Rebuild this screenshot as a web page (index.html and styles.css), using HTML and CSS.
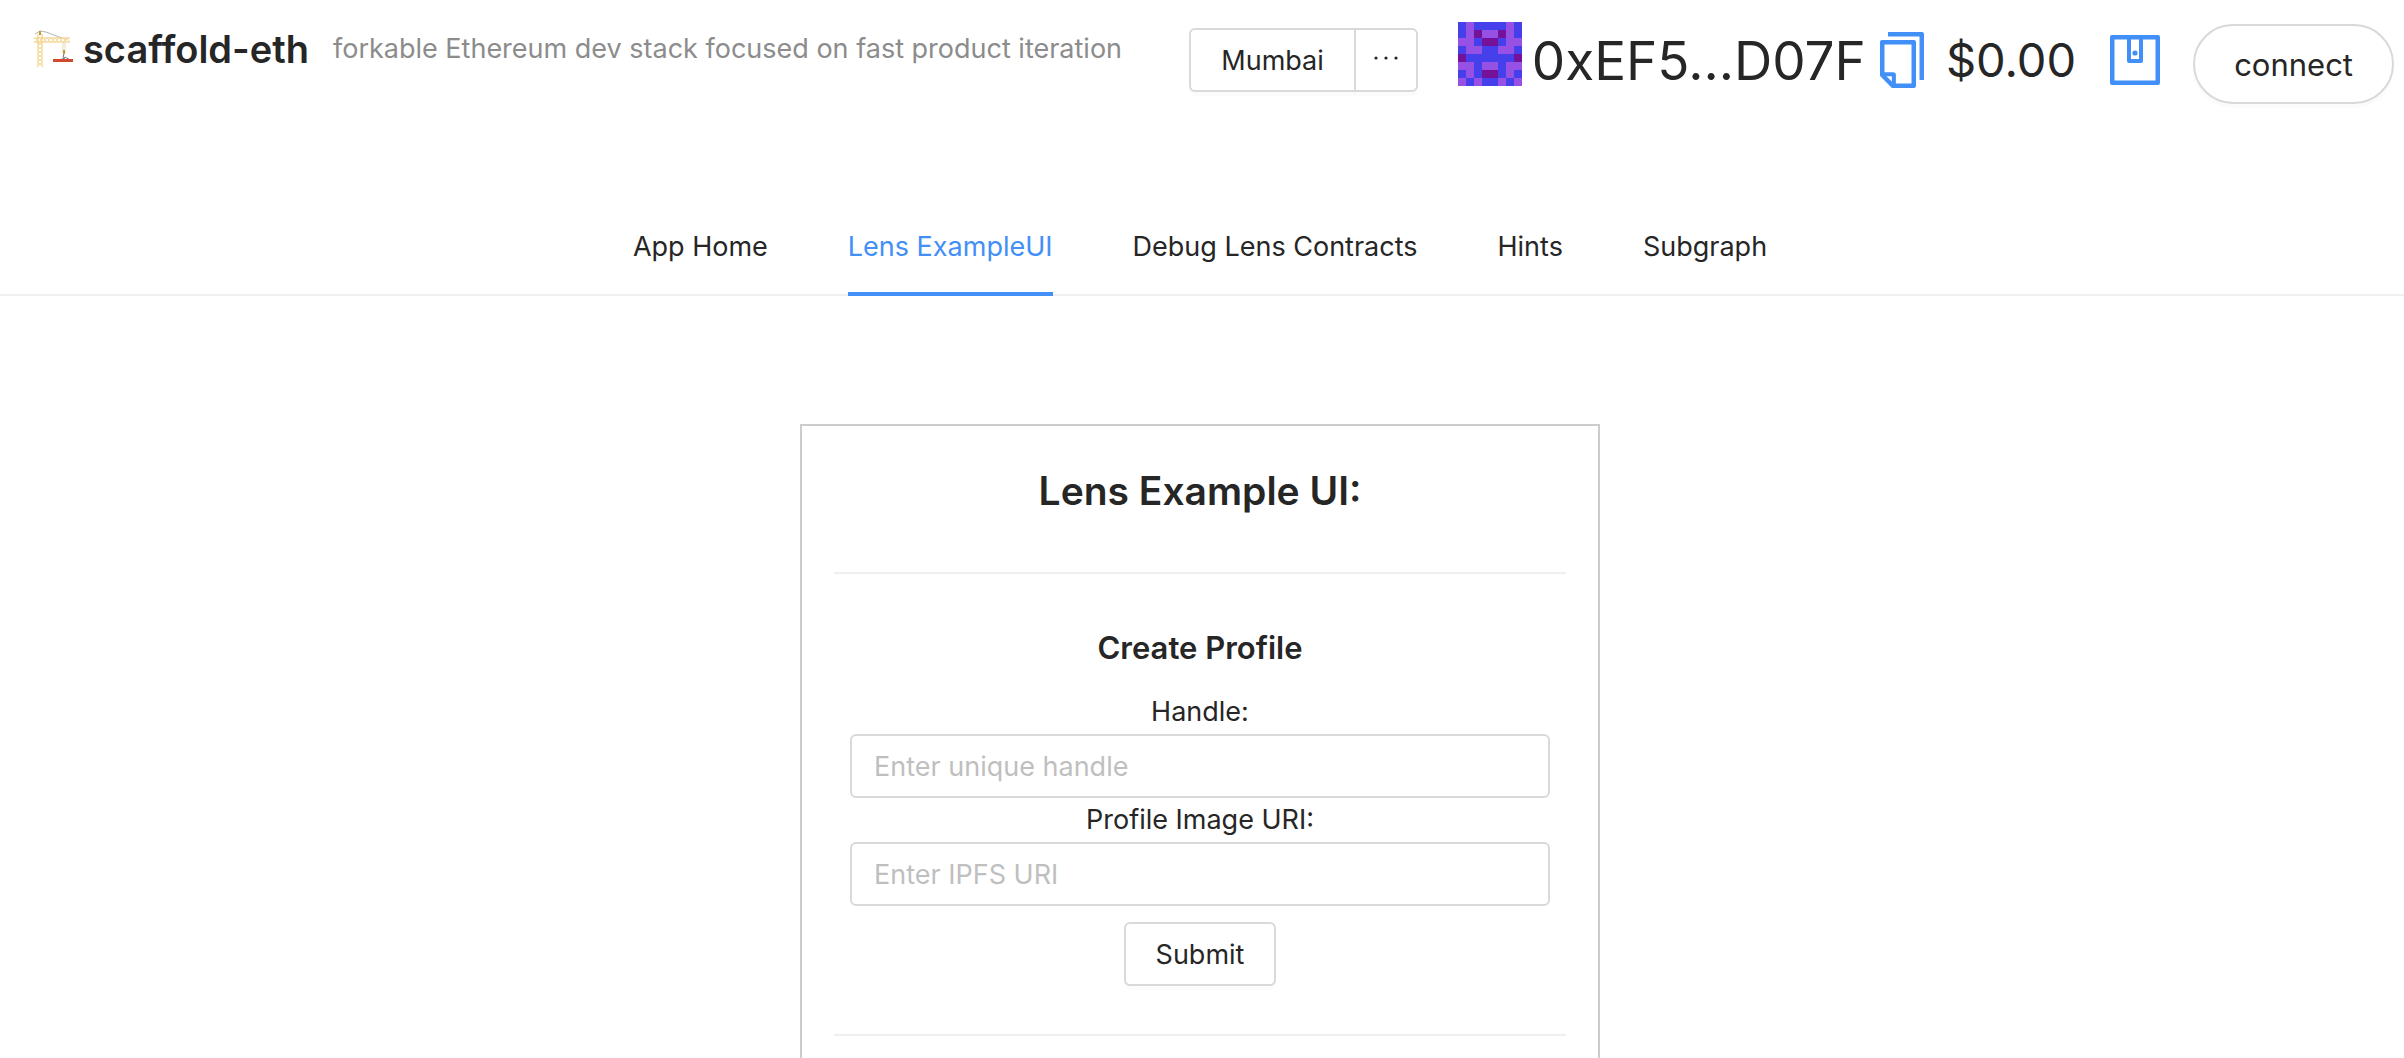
FILE: index.html
```html
<!DOCTYPE html>
<html lang="en">
<head>
<meta charset="utf-8">
<title>scaffold-eth</title>
<meta name="viewport" content="width=device-width, initial-scale=1">
<link rel="stylesheet" href="styles.css">
</head>
<body>
<header class="header">
  <a class="brand" href="#">
    <svg class="crane" viewBox="0 0 40 40" aria-hidden="true">
      <path d="M1 5L6 2L12 3L33 11" fill="none" stroke="#b5b5b5" stroke-width="1"/>
      <g fill="none" stroke="#f1c76a" stroke-width="1">
        <path d="M4 5V38M8 5V38" />
        <path d="M4 13l4 4l-4 4l4 4l-4 4l4 4l-4 4M8 13l-4 4l4 4l-4 4l4 4l-4 4l4 4" stroke="#f5dca4"/>
        <path d="M0 9H36M0 13H36"/>
        <path d="M1 9l4 4l4-4l4 4l4-4l4 4l4-4l4 4l4-4l3 4M1 13l4-4l4 4l4-4l4 4l4-4l4 4l4-4l4 4" stroke="#f5dca4"/>
        <path d="M29 13V24M31 13V24" stroke="#ead9b0"/>
      </g>
      <path d="M5 2h2v4h-2zM29 21h2v4h-2z" fill="#c39a2f"/>
      <path d="M30 25l-1 3l2 1l-8 3M31 28l7 4" fill="none" stroke="#777" stroke-width="1"/>
      <path d="M19 30h20v3h-20z" fill="#d2492f"/>
    </svg>
    <h1 class="brand-name">scaffold-eth</h1>
    <span class="tagline">forkable Ethereum dev stack focused on fast product iteration</span>
  </a>
  <div class="account">
    <div class="network">
      <button class="button network-name" type="button">Mumbai</button>
      <button class="button network-more" type="button" aria-label="More networks">
        <svg width="24" height="4" viewBox="0 0 24 4" fill="#262626" aria-hidden="true"><circle cx="2" cy="2" r="1.600"/><circle cx="12" cy="2" r="1.600"/><circle cx="22" cy="2" r="1.600"/></svg>
      </button>
    </div>
    <svg class="blockie" viewBox="0 0 8 8" shape-rendering="crispEdges" aria-hidden="true">
      <path fill="#463fec" d="M0 0h8v8h-8z"/>
      <path fill="#9750e4" d="M1 0h1v4h-1zM6 0h1v4h-1zM3 1h2v1h-2zM0 2h1v1h-1zM7 2h1v1h-1zM2 3h1v1h-1zM5 3h1v1h-1zM0 5h2v1h-2zM3 5h2v1h-2zM6 5h2v1h-2zM1 6h1v1h-1zM6 6h1v1h-1zM0 7h1v1h-1zM2 7h1v1h-1zM5 7h1v1h-1zM7 7h1v1h-1z"/>
      <path fill="#751299" d="M2 1h1v1h-1zM5 1h1v1h-1zM3 2h2v1h-2zM0 4h1v1h-1zM7 4h1v1h-1zM3 6h2v1h-2z"/>
    </svg>
    <a class="address" href="#">0xEF5...D07F</a>
    <button class="icon-button copy" type="button" aria-label="Copy address">
      <svg width="44" height="56" viewBox="160 64 704 896" aria-hidden="true"><path d="M832 64H296c-4.400 0-8 3.600-8 8v56c0 4.400 3.600 8 8 8h496v688c0 4.400 3.600 8 8 8h56c4.400 0 8-3.600 8-8V96c0-17.700-14.300-32-32-32zM704 192H192c-17.700 0-32 14.300-32 32v530.700c0 8.500 3.400 16.600 9.400 22.600l173.300 173.300c2.200 2.200 4.700 4 7.400 5.500v1.900h4.200c3.500 1.300 7.200 2 11 2H704c17.700 0 32-14.300 32-32V224c0-17.700-14.300-32-32-32zM350 856.200L263.900 770H350v86.200zM664 888H414V746c0-22.100-17.900-40-40-40H232V264h432v624z"/></svg>
    </button>
    <span class="balance">$0.00</span>
    <button class="icon-button wallet" type="button" aria-label="Wallet">
      <svg width="50" height="50" viewBox="0 0 50 50" aria-hidden="true"><path fill-rule="evenodd" d="M2 0H48a2 2 0 0 1 2 2V48a2 2 0 0 1-2 2H2a2 2 0 0 1-2-2V2a2 2 0 0 1 2-2zM4.500 4.500V45.500H45.500V4.500H33V26a2 2 0 0 1-2 2H19a2 2 0 0 1-2-2V4.500zM21 4.500V24H29V4.500z"/><circle cx="25" cy="18" r="2.600"/></svg>
    </button>
    <button class="button connect" type="button">connect</button>
  </div>
</header>

<nav class="menu">
  <a class="menu-item" href="#">App Home</a>
  <a class="menu-item active" href="#" aria-current="page">Lens ExampleUI</a>
  <a class="menu-item" href="#">Debug Lens Contracts</a>
  <a class="menu-item" href="#">Hints</a>
  <a class="menu-item" href="#">Subgraph</a>
</nav>

<main class="content">
  <section class="card">
    <h2 class="card-title">Lens Example UI:</h2>
    <hr class="divider">
    <form class="profile">
      <h3 class="profile-title">Create Profile</h3>
      <label class="label" for="handle">Handle:</label>
      <input class="input" id="handle" type="text" placeholder="Enter unique handle">
      <label class="label" for="image">Profile Image URI:</label>
      <input class="input" id="image" type="text" placeholder="Enter IPFS URI">
      <button class="button submit" type="button">Submit</button>
    </form>
    <hr class="divider">
  </section>
</main>
</body>
</html>
```
FILE: styles.css
```css
* {
  box-sizing: border-box;
}

body {
  margin: 0;
  min-height: 100vh;
  display: flex;
  flex-direction: column;
  background: #fff;
  color: #262626;
  font: 27px/44px Inter, "Liberation Sans", sans-serif;
}

h1, h2, h3 {
  margin: 0;
}

a {
  color: inherit;
  text-decoration: none;
}

.button {
  height: 64px;
  padding: 2px 30px 0;
  border: 2px solid #d9d9d9;
  border-radius: 6px;
  background: #fff;
  box-shadow: 0 4px 0 rgba(0, 0, 0, 0.016);
  color: inherit;
  font: inherit;
}

/* Header */

.header {
  display: flex;
  justify-content: space-between;
  align-items: flex-start;
  height: 202px;
  padding: 16px 10px 0 34px;
  white-space: nowrap;
}

.brand {
  display: flex;
  align-items: center;
  height: 66px;
}

.crane {
  width: 40px;
  height: 40px;
  margin-right: 9px;
}

.brand-name {
  margin-right: 24px;
  font-size: 38px;
  font-weight: 600;
}

.tagline {
  color: #8c8c8c;
}

.account {
  display: flex;
  align-items: flex-start;
}

.network {
  display: flex;
  margin: 12px 40px 0 0;
}

.network-name {
  border-radius: 6px 0 0 6px;
}

.network-more {
  display: flex;
  justify-content: center;
  align-items: center;
  width: 64px;
  margin-left: -2px;
  padding: 0 0 4px;
  border-radius: 0 6px 6px 0;
}

.blockie {
  width: 64px;
  height: 64px;
  margin: 6px 10px 0 0;
}

.address {
  margin: 13px 14px 0 0;
  font-size: 53px;
  line-height: 64px;
}

.icon-button {
  display: flex;
  padding: 0;
  border: 0;
  background: none;
  fill: #4290f7;
}

.copy {
  margin: 16px 22px 0 0;
}

.balance {
  margin: 12px 34px 0 0;
  font-size: 47px;
  line-height: 64px;
}

.wallet {
  margin: 19px 33px 0 0;
}

.connect {
  height: 80px;
  margin-top: 8px;
  padding: 2px 39px 0;
  border-radius: 40px;
  font-size: 31px;
}

/* Menu */

.menu {
  display: flex;
  justify-content: center;
  gap: 80px;
  height: 94px;
  padding-right: 4px;
  border-bottom: 2px solid #f0f0f0;
}

.menu-item {
  height: 94px;
  line-height: 90px;
}

.menu-item.active {
  border-bottom: 4px solid #4290f7;
  color: #4290f7;
}

/* Card */

.content {
  flex: 1;
  display: flex;
  justify-content: center;
  padding: 128px 4px 0 0;
}

.card {
  width: 800px;
  padding: 32px;
  border: 2px solid #ccc;
  border-bottom: 0;
}

.card-title {
  font-size: 39px;
  font-weight: 600;
  line-height: 66px;
  text-align: center;
}

.divider {
  height: 2px;
  margin: 48px 0;
  border: 0;
  background: #f0f0f0;
}

.profile {
  display: flex;
  flex-direction: column;
  align-items: center;
  padding: 0 16px;
}

.profile-title {
  margin-bottom: 16px;
  font-size: 31px;
  font-weight: 600;
  line-height: 52px;
}

.input {
  width: 100%;
  height: 64px;
  padding: 0 22px;
  border: 2px solid #d9d9d9;
  border-radius: 6px;
  background: #fff;
  color: inherit;
  font: inherit;
}

.input::placeholder {
  color: #bfbfbf;
}

.submit {
  margin-top: 16px;
}
```
